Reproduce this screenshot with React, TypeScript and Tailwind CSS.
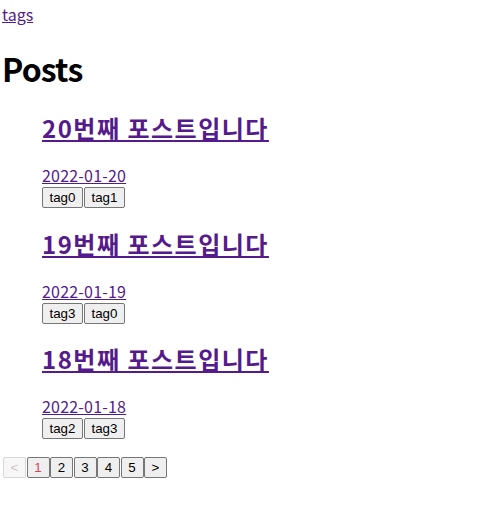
import React from "react";

const posts = [
  { title: "20번째 포스트입니다", date: "2022-01-20", tags: ["tag0", "tag1"] },
  { title: "19번째 포스트입니다", date: "2022-01-19", tags: ["tag3", "tag0"] },
  { title: "18번째 포스트입니다", date: "2022-01-18", tags: ["tag2", "tag3"] },
];

const btn =
  "h-[21px] rounded-[2px] border border-[#767676] bg-[#efefef] font-['Liberation_Sans',Arial,sans-serif] text-[13.33px] leading-[17px]";

export default function App() {
  return (
    <div className="min-h-[508px] bg-white pl-[2px] pt-[4px] font-['Noto_Sans_CJK_KR','Noto_Sans',sans-serif] text-black">
      <a href="#" className="block w-fit text-[16px] leading-[21px] text-[#551a8b] underline">
        tags
      </a>

      <h1 className="mt-[23px] text-[32px] font-bold leading-[40px] tracking-[-0.8px]">Posts</h1>

      <ul className="mt-[24px] pl-[40px]">
        {posts.map((p, i) => (
          <li key={p.date} className={i > 0 ? "mt-[19.5px]" : ""}>
            <h2 className="text-[24px] font-bold leading-[32px] tracking-[1.5px]">
              <a href="#" className="text-[#551a8b] underline">
                {p.title}
              </a>
            </h2>
            <a
              href="#"
              className="mt-[21px] block w-fit text-[16px] leading-[21px] tracking-[0.2px] text-[#551a8b] underline"
            >
              {p.date}
            </a>
            <div className="mt-px flex gap-px">
              {p.tags.map((t) => (
                <button key={t} className={`${btn} px-[6.5px] text-black`}>
                  {t}
                </button>
              ))}
            </div>
          </li>
        ))}
      </ul>

      <div className="mt-[18px] flex gap-[0.5px] pl-px">
        <button
          disabled
          className="h-[21px] w-[23px] rounded-[2px] border border-[#76767640] bg-[#efefef80] font-['Liberation_Sans',Arial,sans-serif] text-[13.33px] leading-[17px] text-[#10101040]"
        >
          &lt;
        </button>
        {["1", "2", "3", "4", "5"].map((n) => (
          <button key={n} className={`${btn} w-[23px] ${n === "1" ? "text-[#e03c5a]" : "text-black"}`}>
            {n}
          </button>
        ))}
        <button className={`${btn} w-[23px] text-black`}>&gt;</button>
      </div>
    </div>
  );
}
